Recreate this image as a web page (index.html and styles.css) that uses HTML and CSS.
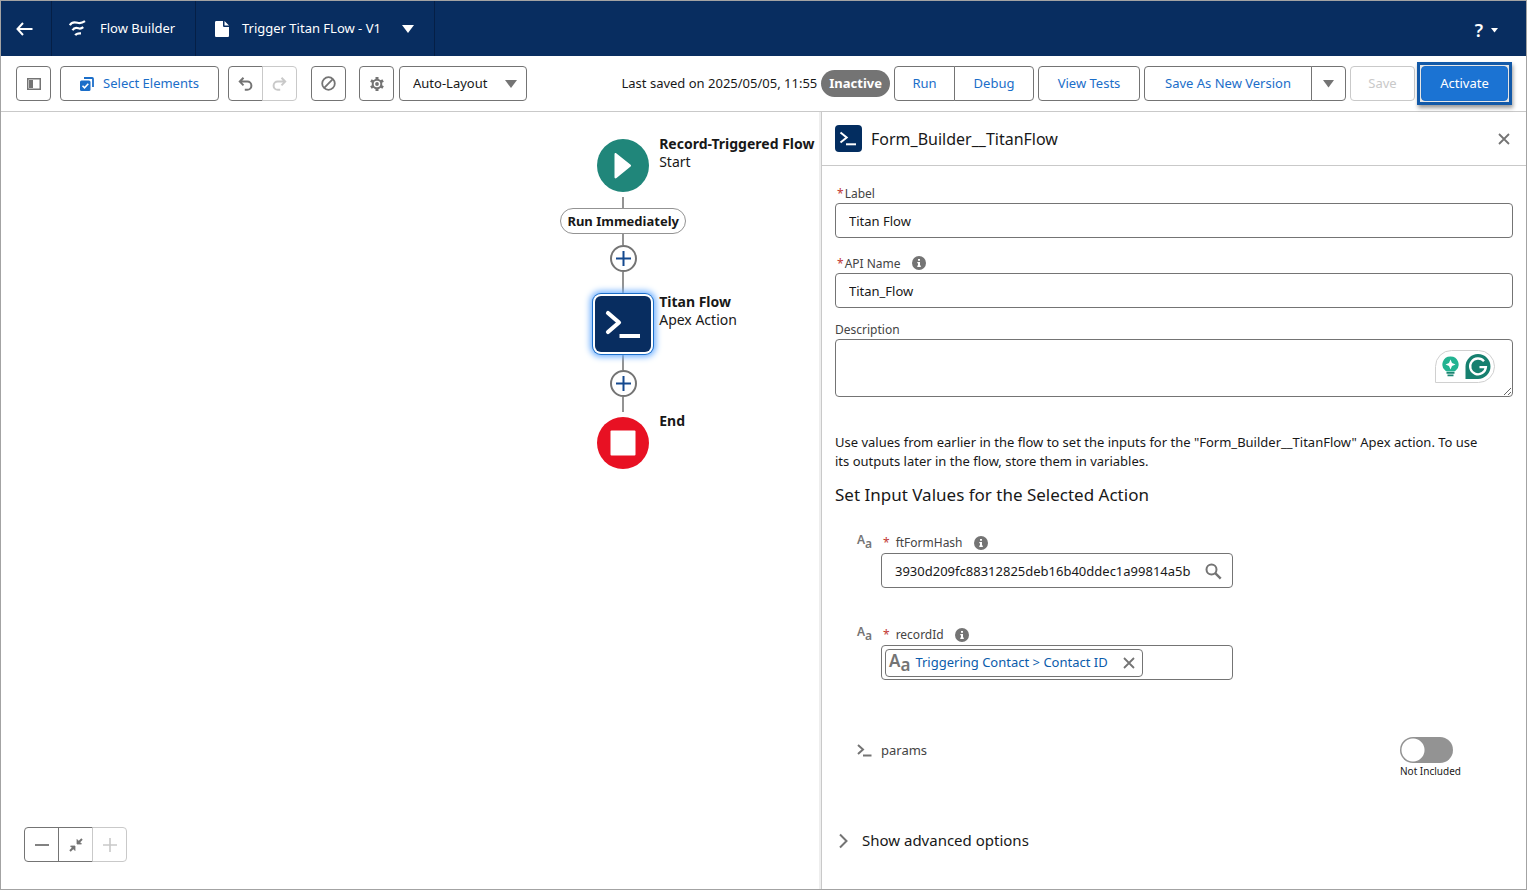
FILE: index.html
```html
<!DOCTYPE html>
<html lang="en">
<head>
<meta charset="utf-8">
<title>Flow Builder</title>
<link rel="stylesheet" href="styles.css">
</head>
<body>
<div class="app">
  <header class="topbar">
    <button class="top-item top-back" aria-label="Back">
      <svg width="17" height="14" viewBox="0 0 17 14" fill="none" stroke="currentColor" stroke-width="2"><path d="M7 1 1.500 7 7 13M1.500 7H16.500"/></svg>
    </button>
    <div class="top-item top-brand">
      <svg width="17" height="17" viewBox="0 0 17 17" fill="none" stroke="currentColor" stroke-width="2.200"><path d="M.8 5.200C3 1.500 5.500 1.800 8.500 2.800S13 3.200 16 1.200M3.500 10.300C5.300 7 7.500 7.500 9.500 8.300S12.500 8.600 14.300 7.200M6.300 15.300C7.500 13 9 13.300 12 13.300"/></svg>
      <span>Flow Builder</span>
    </div>
    <button class="top-item top-title">
      <svg width="14" height="16" viewBox="0 0 14 16" fill="currentColor"><path d="M1.500 0H8v4.500C8 5.500 8.500 6 9.500 6H14v8.500c0 1-.5 1.500-1.500 1.500h-11C.5 16 0 15.500 0 14.500v-13C0 .5.5 0 1.500 0ZM9.500 0 14 4.500H9.500Z"/></svg>
      <span>Trigger Titan FLow - V1</span>
      <svg class="title-caret" width="12" height="8" viewBox="0 0 12 8" fill="currentColor"><path d="M0 0h12L6 8Z"/></svg>
    </button>
    <button class="top-help" aria-label="Help">
      <span class="help-mark">?</span>
      <svg width="7" height="5" viewBox="0 0 7 5" fill="currentColor"><path d="M0 0h7L3.500 4.500Z"/></svg>
    </button>
  </header>

  <div class="toolbar">
    <div class="tools">
      <button class="btn icon-btn" aria-label="Toggle toolbox">
        <svg width="14" height="12" viewBox="0 0 14 12" fill="none" stroke="#747474"><rect x=".75" y=".75" width="12.500" height="10.500" stroke-width="1.500"/><path d="M2 2h4v8H2z" fill="#747474" stroke="none"/></svg>
      </button>
      <button class="btn blue select-elements">
        <svg width="14" height="14" viewBox="0 0 14 14"><path d="M4 1h8.200c.6 0 .8.300.8.800V10" fill="none" stroke="#1b6ec9" stroke-width="1.800"/><rect x="0" y="3.500" width="10.500" height="10.500" rx="1.500" fill="#1b6ec9"/><path d="m2.500 8.800 2 2L8.300 6.800" fill="none" stroke="#fff" stroke-width="1.600"/></svg>
        <span>Select Elements</span>
      </button>
      <div class="group history">
        <button class="btn icon-btn" aria-label="Undo">
          <svg width="15" height="14" viewBox="0 0 15 14" fill="none" stroke="#747474" stroke-width="2"><path d="M5.500.8 1.800 4.600l3.700 3.800M2 4.600h7.300a4.100 4.100 0 0 1 0 8.200H6.800"/></svg>
        </button>
        <button class="btn icon-btn" disabled aria-label="Redo">
          <svg width="15" height="14" viewBox="0 0 15 14" fill="none" stroke="#c9c9c9" stroke-width="2"><path d="m9.500.8 3.700 3.800-3.700 3.800M13 4.600H5.700a4.100 4.100 0 0 0 0 8.200h2.500"/></svg>
        </button>
      </div>
      <button class="btn icon-btn ban" aria-label="Hide warnings">
        <svg width="15" height="15" viewBox="0 0 15 15" fill="none" stroke="#747474" stroke-width="1.800"><circle cx="7.500" cy="7.500" r="6.300"/><path d="m3.200 11.800 8.600-8.600"/></svg>
      </button>
      <button class="btn icon-btn gear" aria-label="Settings">
        <svg width="14" height="14" viewBox="0 0 14 14" fill="none" stroke="#747474"><circle cx="7" cy="7" r="4.300" stroke-width="2"/><circle cx="7" cy="7" r="1.900" fill="#747474" stroke="none"/><path d="M7 0v3M7 11v3M.9 3.500l2.600 1.500M10.500 9l2.600 1.500M.9 10.500 3.500 9M10.500 5l2.600-1.500" stroke-width="3"/></svg>
      </button>
      <div class="layout-select">
        <select class="btn" aria-label="Layout"><option>Auto-Layout</option></select>
        <svg width="12" height="8" viewBox="0 0 12 8" fill="#747474"><path d="M0 0h12L6 8Z"/></svg>
      </div>
    </div>
    <div class="actions">
      <span class="saved">Last saved on 2025/05/05, 11:55</span>
      <span class="badge">Inactive</span>
      <div class="group">
        <button class="btn blue run">Run</button>
        <button class="btn blue debug">Debug</button>
      </div>
      <button class="btn blue tests">View Tests</button>
      <div class="group">
        <button class="btn blue save-as">Save As New Version</button>
        <button class="btn icon-btn" aria-label="More save options"><svg width="11" height="8" viewBox="0 0 11 8" fill="#747474"><path d="M0 0h11L5.500 7.500Z"/></svg></button>
      </div>
      <button class="btn save" disabled>Save</button>
      <div class="spotlight"><button class="btn activate">Activate</button></div>
    </div>
  </div>

  <main class="workspace">
    <section class="canvas">
      <div class="flow">
        <div class="node">
          <svg width="52" height="53" viewBox="0 0 52 53"><ellipse cx="26" cy="26.500" rx="26" ry="26.500" fill="#20867a"/><path d="M17.500 15.500c0-1.500 1-1.800 2-1L33.300 25.500c1 .8 1 1.500 0 2.200L19.500 39c-1 .8-2 .5-2-1Z" fill="#fff"/></svg>
          <div class="node-label"><strong>Record-Triggered Flow</strong><span>Start</span></div>
        </div>
        <i class="wire after-start"></i>
        <button class="path-pill">Run Immediately</button>
        <i class="wire short"></i>
        <button class="add" aria-label="Add element"><svg width="15" height="15" viewBox="0 0 15 15" stroke="#14498f" stroke-width="2"><path d="M7.500 0v15M0 7.500h15"/></svg></button>
        <i class="wire long"></i>
        <div class="node selected">
          <svg width="56" height="56" viewBox="0 0 56 56" fill="none" stroke="#fff"><path d="m13 17 11 9.500L13 36" stroke-width="4.200" stroke-linecap="round" stroke-linejoin="round"/><path d="M24.500 40H45" stroke-width="4"/></svg>
          <div class="node-label"><strong>Titan Flow</strong><span>Apex Action</span></div>
        </div>
        <i class="wire mid"></i>
        <button class="add" aria-label="Add element"><svg width="15" height="15" viewBox="0 0 15 15" stroke="#14498f" stroke-width="2"><path d="M7.500 0v15M0 7.500h15"/></svg></button>
        <i class="wire mid"></i>
        <div class="node end">
          <svg width="52" height="52" viewBox="0 0 52 52"><circle cx="26" cy="26" r="26" fill="#e81123"/><rect x="13.500" y="13.500" width="25" height="25" rx="1" fill="#fff"/></svg>
          <div class="node-label"><strong>End</strong></div>
        </div>
      </div>
      <div class="group zoom">
        <button class="btn icon-btn" aria-label="Zoom out"><svg width="14" height="14" viewBox="0 0 14 14" stroke="#747474" stroke-width="1.800"><path d="M0 7h14"/></svg></button>
        <button class="btn icon-btn" aria-label="Zoom to fit"><svg width="14" height="14" viewBox="0 0 14 14" fill="#747474" stroke="#747474" stroke-width="2"><path d="m13 1-4 4M1 13l4-4"/><path d="M8 1.500V6h4.500ZM1.500 8H6v4.500Z" stroke-width=".8"/></svg></button>
        <button class="btn icon-btn" disabled aria-label="Zoom in"><svg width="14" height="14" viewBox="0 0 14 14" stroke="#c9c9c9" stroke-width="1.600"><path d="M0 7h14M7 0v14"/></svg></button>
      </div>
    </section>

    <aside class="panel">
      <div class="panel-head">
        <svg width="27" height="27" viewBox="0 0 27 27" fill="none" stroke="#fff"><rect width="27" height="27" rx="4" fill="#032d60" stroke="none"/><path d="m5.500 7.500 6.200 5-6.200 5" stroke-width="2"/><path d="M11 19.300h10" stroke-width="2"/></svg>
        <h1>Form_Builder__TitanFlow</h1>
        <button class="plain" aria-label="Close"><svg width="12" height="12" viewBox="0 0 12 12" stroke="#747474" stroke-width="1.800"><path d="m1 1 10 10M11 1 1 11"/></svg></button>
      </div>
      <form class="panel-body">
        <div class="field">
          <label for="f-label"><abbr>*</abbr>Label</label>
          <input id="f-label" type="text" value="Titan Flow">
        </div>
        <div class="field api">
          <label for="f-api"><abbr>*</abbr>API Name <svg class="info" width="14" height="14" viewBox="0 0 14 14"><circle cx="7" cy="7" r="7" fill="#747474"/><path d="M6 3h2v1.800H6zM5.300 6H8v3.500h.8V11H5.300V9.500H6V7.300h-.7z" fill="#fff"/></svg></label>
          <input id="f-api" type="text" value="Titan_Flow">
        </div>
        <div class="field description">
          <label for="f-desc">Description</label>
          <div class="area">
            <textarea id="f-desc"></textarea>
            <div class="assistant">
              <svg width="17" height="21" viewBox="0 0 17 21"><path d="M8.500.5a8 8 0 0 1 5 14.300c-.6.600-1 .7-1.500.7H5c-.5 0-1-.1-1.500-.7A8 8 0 0 1 8.500.5Z" fill="#22b391"/><path d="M8.500 3.500 10 7l3.500 1.500L10 10l-1.500 3.500L7 10 3.500 8.500 7 7Z" fill="#fff"/><path d="M4.500 16.800h8M5.500 19.300h6" stroke="#1b8573" stroke-width="1.800"/></svg>
              <svg width="26" height="25" viewBox="0 0 26 25"><path d="M13 0a12.500 12.500 0 0 1 0 25H.5V12.500A12.500 12.500 0 0 1 13 0Z" fill="#16806f"/><path d="M19 7.200A7.900 7.900 0 1 0 20.900 13.200H14.500" fill="none" stroke="#fff" stroke-width="2.300"/></svg>
            </div>
          </div>
        </div>
        <p>Use values from earlier in the flow to set the inputs for the "Form_Builder__TitanFlow" Apex action. To use its outputs later in the flow, store them in variables.</p>
        <h2>Set Input Values for the Selected Action</h2>

        <div class="param">
          <span class="type"><b>A</b><b>a</b></span>
          <label for="p-hash"><abbr>*</abbr>ftFormHash <svg class="info" width="14" height="14" viewBox="0 0 14 14"><circle cx="7" cy="7" r="7" fill="#747474"/><path d="M6 3h2v1.800H6zM5.300 6H8v3.500h.8V11H5.300V9.500H6V7.300h-.7z" fill="#fff"/></svg></label>
          <div class="lookup">
            <input id="p-hash" type="text" value="3930d209fc88312825deb16b40ddec1a99814a5b">
            <svg width="17" height="17" viewBox="0 0 17 17" fill="none" stroke="#747474"><circle cx="6.500" cy="6.500" r="5" stroke-width="2"/><path d="m10.200 10.200 5.500 5.500" stroke-width="2.400"/></svg>
          </div>
        </div>
        <div class="param">
          <span class="type"><b>A</b><b>a</b></span>
          <label for="p-record"><abbr>*</abbr>recordId <svg class="info" width="14" height="14" viewBox="0 0 14 14"><circle cx="7" cy="7" r="7" fill="#747474"/><path d="M6 3h2v1.800H6zM5.300 6H8v3.500h.8V11H5.300V9.500H6V7.300h-.7z" fill="#fff"/></svg></label>
          <div class="lookup pill-box">
            <span class="pill">
              <span class="type large"><b>A</b><b>a</b></span>
              <a href="#">Triggering Contact &gt; Contact ID</a>
              <button type="button" class="plain" aria-label="Remove"><svg width="12" height="12" viewBox="0 0 12 12" stroke="#747474" stroke-width="1.800"><path d="m1 1 10 10M11 1 1 11"/></svg></button>
            </span>
            <input id="p-record" type="text">
          </div>
        </div>
        <div class="params-row">
          <svg width="15" height="13" viewBox="0 0 15 13" fill="none" stroke="#747474" stroke-width="2"><path d="M1 1l5 4.500L1 10M6 11.500h8.500"/></svg>
          <label for="p-params">params</label>
          <div class="toggle"><input id="p-params" type="checkbox" role="switch"><span>Not Included</span></div>
        </div>
        <button type="button" class="advanced">
          <svg width="9" height="16" viewBox="0 0 9 16" fill="none" stroke="#747474" stroke-width="2"><path d="m1 1.500 6.500 6.500L1 14.500"/></svg>
          <span>Show advanced options</span>
        </button>
      </form>
    </aside>
  </main>
</div>
</body>
</html>
```

FILE: styles.css
```css
* { box-sizing: border-box; }

body {
  margin: 0;
  font: 13px/19px "Noto Sans", "Open Sans", sans-serif;
  color: #181818;
  background: #fff;
}

button, input, select, textarea { font: inherit; color: inherit; }
button { padding: 0; border: 0; background: none; white-space: nowrap; }
svg { display: block; flex: none; }

.app {
  display: flex;
  flex-direction: column;
  min-height: 100vh;
  border: 1px solid #a3a3a3;
}

/* Top bar */
.topbar {
  display: flex;
  height: 55px;
  background: #082d60;
  color: #fff;
}
.top-item {
  display: flex;
  align-items: center;
  border-right: 1px solid #051f46;
}
.top-back { width: 51px; padding-left: 15px; }
.top-brand { gap: 14px; width: 144px; padding-left: 17px; }
.top-title { gap: 13px; width: 239px; padding-left: 19px; }
.title-caret { margin-left: 8px; }
.top-help {
  display: flex;
  align-items: center;
  gap: 8px;
  margin-left: auto;
  padding: 4px 28px 0 0;
}
.help-mark { font-size: 18px; font-weight: 600; }

/* Toolbar */
.toolbar {
  display: flex;
  justify-content: space-between;
  align-items: center;
  height: 56px;
  padding: 0 14px 0 15px;
  border-bottom: 1px solid #c9c9c9;
}
.tools, .actions { display: flex; align-items: center; }
.actions { gap: 4px; }
.btn {
  display: flex;
  align-items: center;
  justify-content: center;
  height: 35px;
  border: 1px solid #747474;
  border-radius: 4px;
  background: #fff;
}
.btn:disabled { border-color: #c9c9c9; color: #c9c9c9; }
.icon-btn { width: 35px; }
.blue { color: #1b6ec9; }
.group { display: flex; }
.group .btn + .btn { margin-left: -1px; border-radius: 0; }
.group .btn:first-child { border-radius: 4px 0 0 4px; }
.group .btn:last-child { border-radius: 0 4px 4px 0; }
.select-elements { gap: 9px; width: 159px; margin: 0 9px; }
.ban { margin: 0 13px 0 14px; }
.gear { margin-right: 5px; }
.layout-select { position: relative; }
.layout-select select { width: 128px; padding: 0 13px; appearance: none; }
.layout-select svg { position: absolute; right: 10px; top: 14px; pointer-events: none; }
.saved { white-space: nowrap; }
.badge {
  padding: 4px 8px;
  border-radius: 14px;
  background: #747474;
  color: #fff;
  font-weight: 700;
}
.run { width: 61px; }
.debug { width: 80px; }
.tests { width: 102px; }
.save-as { width: 168px; }
.save { width: 65px; }
.spotlight {
  margin-left: -2px;
  padding: 1px;
  border: 3px solid #1259a8;
  background: #e6e6e6;
  box-shadow: 1px 3px 4px #0006;
}
.activate { width: 87px; border-color: #1b6ec9; background: #1b73d3; color: #fff; }

/* Workspace */
.workspace {
  display: grid;
  grid-template-columns: 820fr 705fr;
  flex: 1;
}
.canvas { position: relative; }
.flow {
  position: absolute;
  left: 76%;
  top: 27px;
  display: flex;
  flex-direction: column;
  align-items: center;
  width: 126px;
  margin-left: -64px;
}
.node { position: relative; }
.node-label {
  position: absolute;
  left: 62px;
  top: -4px;
  display: flex;
  flex-direction: column;
  font-size: 14px;
  line-height: 18px;
  white-space: nowrap;
}
.wire { width: 2px; background: #939393; }
.after-start { height: 11px; margin-top: 5px; }
.short { height: 11px; }
.long { height: 21px; }
.mid { height: 15px; }
.path-pill {
  height: 26px;
  padding: 0 6px;
  border: 1px solid #939393;
  border-radius: 13px;
  font-weight: 700;
}
.add {
  display: flex;
  align-items: center;
  justify-content: center;
  width: 27px;
  height: 27px;
  border: 2px solid #747474;
  border-radius: 50%;
}
.selected {
  margin: 3px 0;
  border-radius: 6px;
  background: #082d60;
  box-shadow: 0 0 0 2px #fff, 0 0 0 3px #1b6ec9, 0 0 6px 5px #6fb0ff;
}
.selected .node-label { left: 64px; top: -3px; }
.end { margin-top: 5px; }
.end .node-label { top: -5px; }
.zoom { position: absolute; left: 23px; bottom: 27px; }

/* Property panel */
.panel { border-left: 1px solid #c9c9c9; box-shadow: -2px 0 0 #eee; }
.panel-head {
  display: flex;
  align-items: center;
  gap: 9px;
  height: 54px;
  padding: 0 16px 0 13px;
  border-bottom: 1px solid #c9c9c9;
}
h1 { flex: 1; margin: 0; font-size: 16px; line-height: 24px; font-weight: 400; }
h2 { margin: 0 0 25px; font-size: 17px; line-height: 24px; font-weight: 400; }
.panel-body { padding: 17px 13px 16px; }
.field { margin-bottom: 15px; }
.api { margin-bottom: 11px; }
.description { margin-bottom: 36px; }
label {
  display: flex;
  align-items: center;
  height: 20px;
  color: #444;
  font-size: 12px;
}
abbr { margin: 0 1px 0 2px; color: #c23934; }
.info { margin-left: 11px; }
input[type="text"], textarea {
  display: block;
  width: 100%;
  height: 35px;
  padding: 0 13px;
  border: 1px solid #747474;
  border-radius: 4px;
  background: #fff;
}
.area { position: relative; }
.area textarea { height: 58px; resize: vertical; }
.assistant {
  position: absolute;
  right: 18px;
  top: 11px;
  display: flex;
  align-items: center;
  gap: 6px;
  height: 33px;
  padding: 0 3px 0 6px;
  border: 1px solid #d0d0d0;
  border-radius: 17px 17px 17px 0;
}
p { margin: 0 0 12px; padding-right: 24px; }

.param {
  display: grid;
  grid-template-columns: 24px minmax(0, 352px);
  margin: 0 0 36px 22px;
}
.param label { height: 21px; }
.param abbr { margin-right: 6px; }
.type { display: flex; color: #747474; font-size: 12px; line-height: 16px; }
.type b + b { padding-top: 4px; }
.type b { font-weight: 600; }
.pill .large { font-size: 17px; line-height: 20px; }
.lookup {
  position: relative;
  grid-column: 2;
  display: flex;
  align-items: center;
  height: 35px;
  padding: 0 35px 0 13px;
  border: 1px solid #747474;
  border-radius: 4px;
}
.lookup > svg { position: absolute; right: 10px; top: 9px; }
#p-hash { border-width: 0; height: 33px; padding: 0; }
.pill-box { padding: 0 3px; }
.pill {
  display: flex;
  align-items: center;
  flex: none;
  gap: 5px;
  height: 28px;
  padding: 0 7px 0 3px;
  border: 1px solid #747474;
  border-radius: 4px;
}
.pill a { margin-right: 10px; color: #0b5cab; text-decoration: none; }
#p-record { flex: 1; width: auto; min-width: 0; height: 28px; border: 0; }

.params-row {
  display: flex;
  align-items: flex-start;
  gap: 9px;
  margin: 0 50px 52px 22px;
  padding-top: 21px;
}
.params-row > svg { margin-top: 7px; }
.params-row label { height: 26px; font-size: 13px; }
.toggle { width: 63px; margin-left: auto; font-size: 10px; line-height: 16px; white-space: nowrap; }
.toggle span { display: block; }
.toggle input {
  display: block;
  appearance: none;
  width: 53px;
  height: 26px;
  margin: 0;
  border-radius: 13px;
  background: radial-gradient(circle at 13px 13px, #fff 11px, #939393 12px);
}
.advanced { display: flex; align-items: center; gap: 14px; padding-left: 4px; font-size: 15px; }
```
